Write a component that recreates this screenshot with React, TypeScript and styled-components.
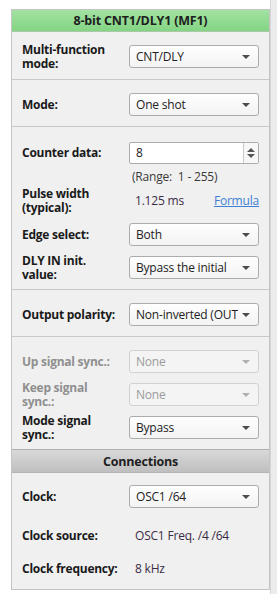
import React from 'react';
import styled, { createGlobalStyle } from 'styled-components';

const GlobalStyle = createGlobalStyle`
  html, body {
    margin: 0;
    padding: 0;
    background: #ffffff;
  }
  body {
    font-family: "Open Sans", "Noto Sans", sans-serif;
  }
`;

const Page = styled.div`
  display: flex;
  width: 277px;
  height: 594px;
  padding-top: 9px;
  box-sizing: border-box;
`;

const LeftGap = styled.div`
  width: 11px;
  flex: none;
`;

const Panel = styled.div`
  width: 259px;
  flex: none;
  align-self: flex-start;
  background: #f0f0f0;
  border: 1px solid #c4c4c4;
  box-sizing: border-box;
`;

const RightStrip = styled.div`
  flex: 1;
  margin-top: -9px;
  background: #ececec;
  border-left: 1px solid #d6d6d6;
`;

const Header = styled.div<{ $tone: 'green' | 'gray' }>`
  height: ${(p) => (p.$tone === 'green' ? 22 : 24)}px;
  display: flex;
  align-items: center;
  justify-content: center;
  font-weight: 700;
  font-size: 12.5px;
  color: #1e1e1e;
  letter-spacing: -0.2px;
  box-sizing: border-box;
  background: ${(p) =>
    p.$tone === 'green'
      ? 'linear-gradient(#a2e2a2, #84d484)'
      : 'linear-gradient(#d9d9d9, #bfbfbf)'};
  border-bottom: 1px solid ${(p) => (p.$tone === 'green' ? '#a9c9a9' : '#b4b4b4')};
  border-top: ${(p) => (p.$tone === 'gray' ? '1px solid #b0b0b0' : 'none')};
`;

const Section = styled.div<{ $top: number; $bottom: number; $last?: boolean }>`
  padding: ${(p) => p.$top}px 10px ${(p) => p.$bottom}px 10px;
  border-bottom: ${(p) => (p.$last ? 'none' : '1px solid #c8c8c8')};
  display: flex;
  flex-direction: column;
`;

const Row = styled.div<{ $h?: number; $mt?: number }>`
  height: ${(p) => p.$h ?? 33}px;
  margin-top: ${(p) => p.$mt ?? 0}px;
  display: flex;
  align-items: center;
`;

const Label = styled.div<{ $disabled?: boolean; $w?: number }>`
  width: ${(p) => p.$w ?? 107}px;
  flex: none;
  font-weight: 700;
  font-size: 12px;
  line-height: 14px;
  letter-spacing: -0.25px;
  color: ${(p) => (p.$disabled ? '#8f8f8f' : '#1a1a1a')};
`;

const Select = styled.div<{ $disabled?: boolean }>`
  width: 131px;
  height: 23px;
  box-sizing: border-box;
  display: flex;
  align-items: center;
  padding: 0 8px 0 6px;
  border: 1px solid ${(p) => (p.$disabled ? '#d2d2d2' : '#acacac')};
  border-radius: 3px;
  background: ${(p) => (p.$disabled ? '#f4f4f4' : 'linear-gradient(#fefefe, #f3f3f3)')};
  font-size: 12px;
  letter-spacing: -0.2px;
  color: ${(p) => (p.$disabled ? '#9b9b9b' : '#222222')};
  white-space: nowrap;
  overflow: hidden;
`;

const SelectText = styled.span`
  flex: 1;
  overflow: hidden;
  white-space: nowrap;
`;

const Arrow = styled.span<{ $disabled?: boolean }>`
  flex: none;
  width: 0;
  height: 0;
  margin-left: 4px;
  border-left: 4px solid transparent;
  border-right: 4px solid transparent;
  border-top: 4px solid ${(p) => (p.$disabled ? '#b0b0b0' : '#4a4a4a')};
`;

const Spin = styled.div`
  width: 131px;
  height: 22px;
  box-sizing: border-box;
  display: flex;
  border: 1px solid #acacac;
  border-radius: 2px;
  background: #ffffff;
  font-size: 12px;
  color: #222;
`;

const SpinValue = styled.div`
  flex: 1;
  display: flex;
  align-items: center;
  padding-left: 6px;
`;

const SpinButtons = styled.div`
  width: 14px;
  border-left: 1px solid #c8c8c8;
  display: flex;
  flex-direction: column;
  align-items: center;
  justify-content: center;
  gap: 2px;
  background: #f7f7f7;
`;

const Tri = styled.span<{ $up?: boolean }>`
  width: 0;
  height: 0;
  border-left: 4px solid transparent;
  border-right: 4px solid transparent;
  ${(p) => (p.$up ? 'border-bottom: 4px solid #555;' : 'border-top: 4px solid #555;')}
`;

const Note = styled.div`
  padding-left: 110px;
  font-size: 12px;
  letter-spacing: -0.2px;
  color: #3a3a3a;
`;

const Value = styled.div`
  flex: 1;
  padding-left: 6px;
  font-size: 12px;
  letter-spacing: -0.2px;
  color: #3a2c45;
`;

const Link = styled.a`
  font-size: 12px;
  color: #3c7fd6;
  text-decoration: underline;
  letter-spacing: -0.2px;
`;

type DropProps = { label: React.ReactNode; value: string; disabled?: boolean };

const DropRow = ({ label, value, disabled }: DropProps) => (
  <Row>
    <Label $disabled={disabled}>{label}</Label>
    <Select $disabled={disabled}>
      <SelectText>{value}</SelectText>
      <Arrow $disabled={disabled} />
    </Select>
  </Row>
);

export default function App() {
  return (
    <>
      <GlobalStyle />
      <Page>
        <LeftGap />
        <Panel>
          <Header $tone="green">8-bit CNT1/DLY1 (MF1)</Header>
          <Section $top={8} $bottom={6}>
            <DropRow label={<>Multi-function<br />mode:</>} value="CNT/DLY" />
          </Section>
          <Section $top={8} $bottom={5}>
            <DropRow label="Mode:" value="One shot" />
          </Section>
          <Section $top={9} $bottom={5}>
            <Row>
              <Label>Counter data:</Label>
              <Spin>
                <SpinValue>8</SpinValue>
                <SpinButtons>
                  <Tri $up />
                  <Tri />
                </SpinButtons>
              </Spin>
            </Row>
            <Row $h={14}>
              <Note>(Range:&nbsp; 1 - 255)</Note>
            </Row>
            <Row $h={35}>
              <Label>Pulse width<br />(typical):</Label>
              <Value>1.125 ms</Value>
              <Link>Formula</Link>
            </Row>
            <DropRow label="Edge select:" value="Both" />
            <DropRow label={<>DLY IN init.<br />value:</>} value="Bypass the initial" />
          </Section>
          <Section $top={8} $bottom={5}>
            <DropRow label="Output polarity:" value="Non-inverted (OUT" />
          </Section>
          <Section $top={8} $bottom={5} $last>
            <DropRow label="Up signal sync.:" value="None" disabled />
            <DropRow label={<>Keep signal<br />sync.:</>} value="None" disabled />
            <DropRow label={<>Mode signal<br />sync.:</>} value="Bypass" />
          </Section>
          <Header $tone="gray">Connections</Header>
          <Section $top={7} $bottom={4} $last>
            <DropRow label="Clock:" value="OSC1 /64" />
            <Row $mt={6}>
              <Label>Clock source:</Label>
              <Value>OSC1 Freq. /4 /64</Value>
            </Row>
            <Row>
              <Label>Clock frequency:</Label>
              <Value>8 kHz</Value>
            </Row>
          </Section>
        </Panel>
        <RightStrip />
      </Page>
    </>
  );
}
